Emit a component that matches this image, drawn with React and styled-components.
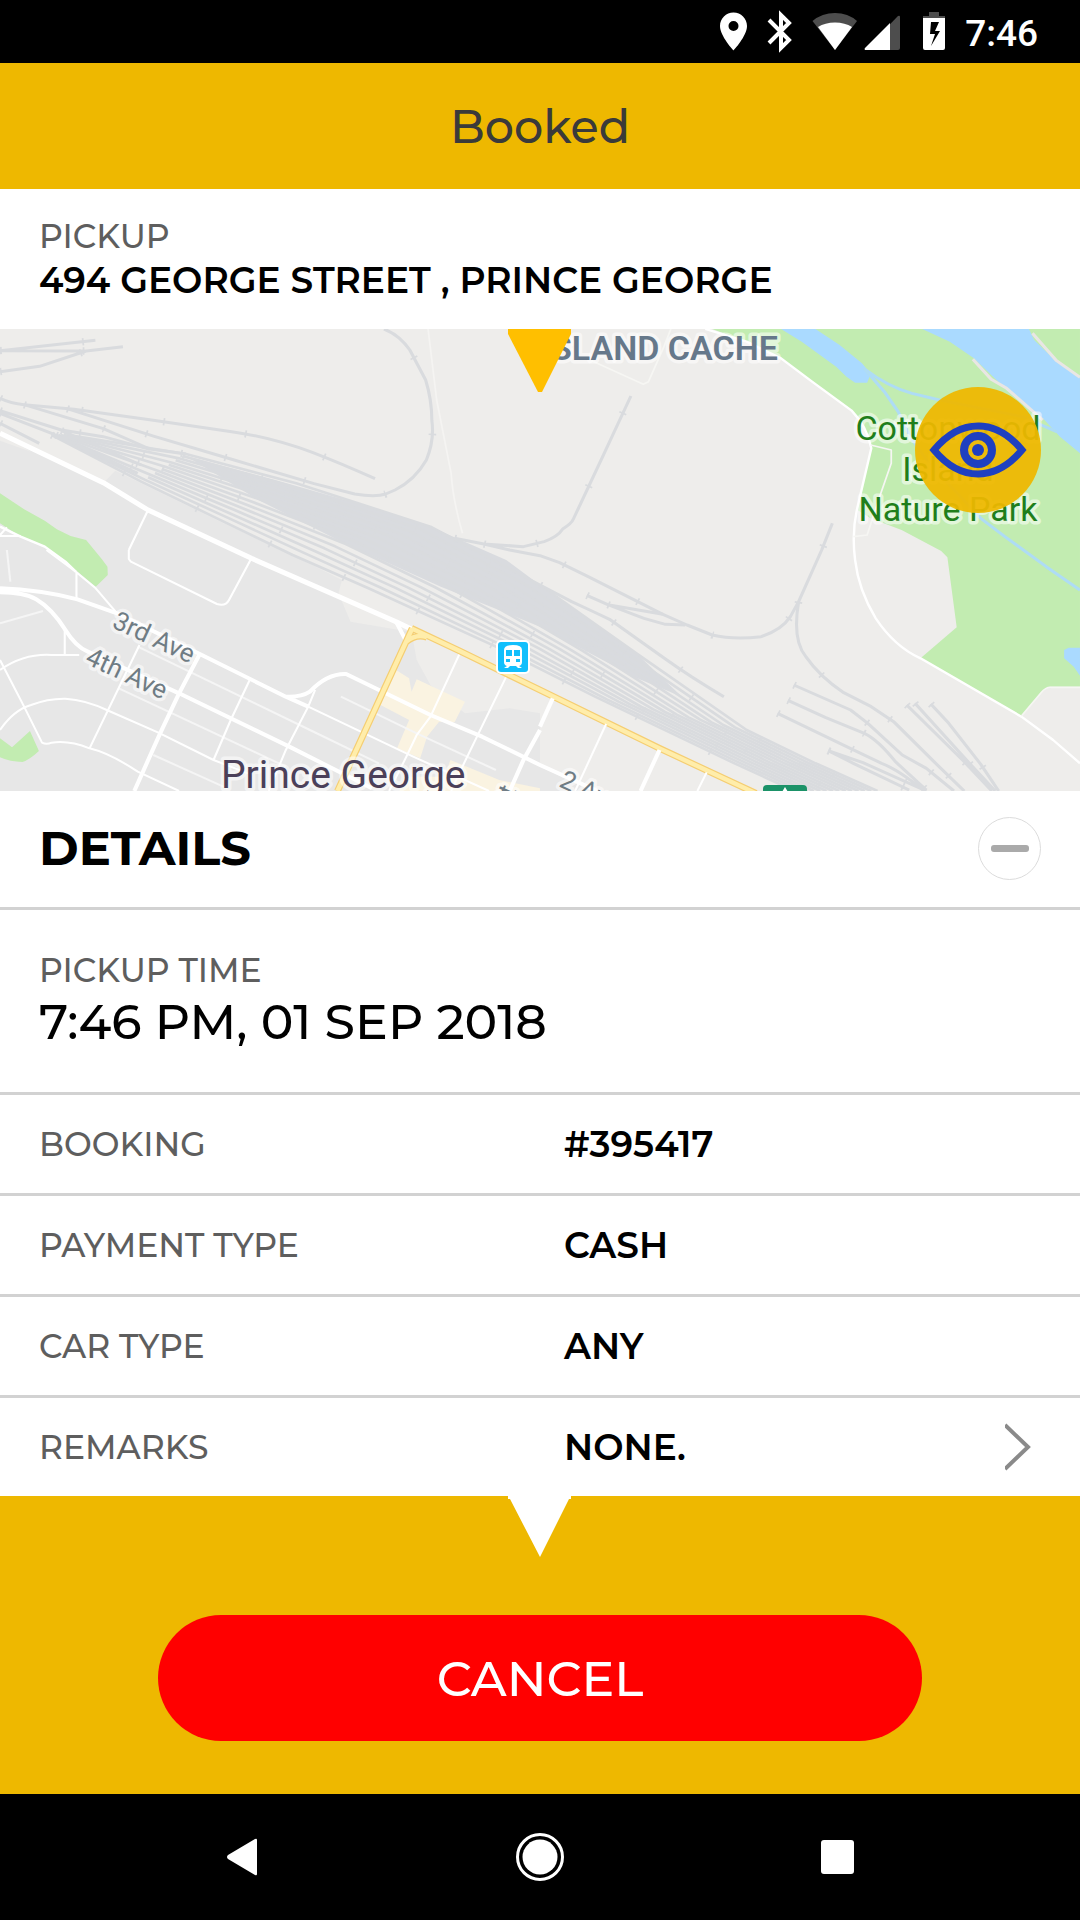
import React from "react";
import styled, { createGlobalStyle } from "styled-components";

const GlobalStyle = createGlobalStyle`
  *, *::before, *::after { box-sizing: border-box; }
  body { margin: 0; background: #000; }
  button { font: inherit; border: 0; padding: 0; background: none; cursor: pointer; }
`;

const Screen = styled.div`
  display: flex;
  flex-direction: column;
  min-height: 100vh;
  background: #fff;
  color: #000;
  font-family: Montserrat, Inter, "Open Sans", sans-serif;
  font-weight: 500;
`;

const StatusBar = styled.div`
  display: flex;
  justify-content: flex-end;
  gap: 5px;
  height: 63px;
  padding-right: 42px;
  background: #000;
  color: #fff;
`;

const Clock = styled.time`
  font: 500 37px/67px Roboto, sans-serif;
`;

const TitleBar = styled.header`
  display: flex;
  align-items: center;
  justify-content: center;
  height: 126px;
  background: #eeb800;
`;

const Title = styled.h1`
  margin: 0;
  font-size: 46px;
  font-weight: 500;
  color: #3a3a3a;
`;

const Block = styled.section`
  padding: ${(p) => (p.$roomy ? "38px 39px 40px" : "25px 39px 27px")};
  border-bottom: ${(p) => (p.$roomy ? "3px solid #d2d2d2" : "0")};
`;

const Label = styled.div`
  font-size: 33px;
  line-height: 44px;
  font-weight: 500;
  color: #5e5e5e;
`;

const Value = styled.div`
  font-size: ${(p) => (p.$large ? "49px" : "36px")};
  line-height: ${(p) => (p.$large ? "60px" : "44px")};
  font-weight: ${(p) => (p.$large ? 500 : 600)};
`;

const MapPanel = styled.div`
  position: relative;
  height: 462px;
  overflow: hidden;
`;

const MapDrawing = styled.svg`
  display: block;
  width: 100%;
  height: 100%;
  font-family: Roboto, sans-serif;
  font-weight: 400;
`;

const MapPointer = styled.svg`
  position: absolute;
  top: 0;
  left: 50%;
  margin-left: -32px;
`;

const EyeButton = styled.button`
  position: absolute;
  top: 58px;
  right: 39px;
  display: grid;
  place-items: center;
  width: 126px;
  height: 126px;
  border-radius: 50%;
  background: rgba(238, 184, 0, 0.94);
`;

const DetailsBar = styled.div`
  display: flex;
  align-items: center;
  justify-content: space-between;
  height: 119px;
  padding: 0 39px 2px;
  border-bottom: 3px solid #d2d2d2;
`;

const DetailsTitle = styled.h2`
  margin: 0;
  font-size: 48px;
  font-weight: 700;
`;

const CollapseButton = styled.button`
  display: grid;
  place-items: center;
  width: 63px;
  height: 63px;
  border: 1px solid #dcdcdc;
  border-radius: 50%;

  &::before {
    content: "";
    width: 38px;
    height: 7px;
    border-radius: 3px;
    background: #aaa;
  }
`;

const Rows = styled.dl`
  margin: 0;
`;

const Row = styled.div`
  display: grid;
  grid-template-columns: 1fr 1fr;
  column-gap: 48px;
  align-items: center;
  height: 101px;
  padding: 0 39px;
  border-bottom: 3px solid #d2d2d2;

  &:last-child { height: 98px; border-bottom: 0; }
`;

const RowValue = styled(Value)`
  display: flex;
  align-items: center;
  justify-content: space-between;
  margin: 0;
`;

const ChevronButton = styled.button`
  display: flex;
  height: 48px;
`;

const Footer = styled.footer`
  position: relative;
  flex: 1;
  padding: 119px 158px 53px;
  background: #eeb800;
`;

const CancelButton = styled.button`
  width: 100%;
  height: 126px;
  border-radius: 63px;
  background: #f00;
  color: #fff;
  font-size: 49px;
  font-weight: 500;
`;

const NavBar = styled.nav`
  display: grid;
  grid-template-columns: repeat(3, 298px);
  justify-content: center;
  height: 126px;
  background: #000;
`;

const NavButton = styled.button`
  display: grid;
  place-items: center;
`;

/* Upper and lower outline of the rail yard; tracks are interpolated between. */
const yardTop = [[200,345],[540,402],[860,490],[1250,620],[1568,795],[1848,1000],[2168,1230],[2368,1330],[2548,1413]];
const yardBottom = [[150,345],[410,485],[630,595],[850,705],[1070,805],[1440,980],[1728,1130],[2133,1330],[2308,1413]];
const TRACKS = 14;
const yardTracks = Array.from({ length: TRACKS }, (_, i) => {
  const t = i / (TRACKS - 1);
  return yardTop
    .map(([x, y], k) => {
      const [bx, by] = yardBottom[k];
      return `${(x + (bx - x) * t).toFixed(0)},${(y + (by - y) * t).toFixed(0)}`;
    })
    .slice(i % 2 === 0 || i === TRACKS - 1 ? 0 : 1)
    .join(" ");
});

const rails = [
  "M0 92L250 93L357 80M0 155L115 139L250 93M0 92L277 61",
  "M0 235Q30 250 70 254L215 268L435 299L673 335Q790 352 907 397Q990 430 1089 476",
  "M70 254L300 326L435 387L540 402M195 266L448 349L680 420L912 491L1030 522Q1090 532 1120 522L1147 510Q1205 480 1238 420Q1262 360 1254 302Q1254 240 1236 180L1190 90Q1160 45 1115 27",
  "M0 272L178 330L300 350L435 388M0 280L150 340L400 460M0 310L114 370M178 332L410 435",
  "M1320 655L1405 672L1520 680L1580 665Q1620 650 1634 627Q1660 610 1665 597L1750 410L1832 228M1405 672L1480 690L1568 707L1625 728L1708 770L1925 883L1995 915L2068 945Q2130 960 2210 950Q2270 930 2295 890L2319 845L2386 690L2417 610",
  "M2319 845Q2300 960 2340 1010Q2380 1070 2450 1118L2530 1160L2595 1205L2712 1325L2800 1413",
  "M1704 826L1765 854L1925 883M1765 854L1870 895L1932 913L1990 915",
  "M1568 795L1660 845L1725 876L1770 898L1925 1012Q2010 1075 2102 1130",
  "M2305 1095L2470 1170L2520 1210L2620 1305L2690 1345L2770 1413M2288 1141L2398 1193L2510 1240Q2550 1260 2600 1325L2690 1410M2258 1180L2475 1288L2560 1330Q2610 1350 2680 1410M2405 1292L2478 1330L2640 1410M2405 1292L2506 1328L2690 1413",
  "M2633 1155L2800 1325L2880 1413M2657 1150L2815 1330L2890 1413M2703 1152L2755 1210L2848 1333L2900 1413",
];

function TownMap() {
  return (
    <MapDrawing viewBox="0 0 1080 462" preserveAspectRatio="xMidYMid slice" role="img" aria-label="Map of Prince George">
      <rect width="1080" height="462" fill="#eeedeb" />
      <g transform="translate(0 -9) scale(.34438 .33333)" fill="none" strokeLinejoin="round">
        <path fill="#e7e7e7" d="M0 362L90 395L0 340L300 488L335 452L630 600L850 706L993 780L983 820L1018 905L1160 930L1195 935L1210 1020L1250 1095L1350 1180L1480 1165L1568 1180V1340L1720 1413H0Z" />
        <path fill="#c2ecb1" d="M0 520L70 568L130 602L165 628L205 648L250 660L296 718L312 740L313 765L278 800L222 752L130 680L60 650L0 610ZM0 1255L35 1282L87 1233L113 1293Q85 1320 65 1326Q30 1326 0 1312Z" />
        <path fill="#c2ecb1" d="M2068 27H3136V1100H3048Q3030 1105 3020 1122L2966 1188L2673 1015L2778 922L2751 712L2733 693L2618 630L2528 595L2490 570L2530 385L2503 310L2473 272L2358 185L2268 115L2168 65Z" />
        <g transform="translate(1568 0)">
          <path fill="#aadaff" d="M700 27H800L870 75L935 130Q957 155 957 170L950 188H915L890 170L860 140L760 65ZM1110 27L1190 65L1260 115L1320 175L1390 240L1465 300L1510 350L1568 400V172L1500 125L1435 60L1420 27Z" />
          <path fill="#aadaff" d="M1568 983H1535L1522 990V1015L1550 1040L1568 1067Z" />
          <path stroke="#e9e6e4" strokeWidth="9" d="M1257 118L1310 178L1355 205L1460 300M1430 40L1500 122L1568 172" />
          <path stroke="#aedcf5" strokeWidth="9" d="M940 145Q1010 200 1080 220L1160 240L1400 290L1500 335M945 150L1000 215L1040 275L1075 350L1130 430L1280 595L1350 650L1470 740L1568 810" />
          <path stroke="#fff" strokeWidth="7" d="M480 27L600 65L700 115L790 185L905 272Q950 320 962 385L920 570Q905 640 915 720Q925 810 975 895Q1030 980 1105 1015L1398 1190L1490 1260L1568 1330" />
          <path stroke="#f6f6f3" strokeWidth="5" d="M150 122L300 193L315 185L360 80L380 27M960 375L1020 390V430L988 525L950 645L910 650M1398 1188L1455 1118Q1470 1100 1485 1102H1568" />
        </g>
        <path stroke="#f5f4f2" strokeWidth="5" d="M1243 27L1268 240L1310 460Q1315 540 1343 640" />

        <g stroke="#d9dbde" strokeWidth="9">
          <path fill="#d9dbdf" stroke="none" d="M540 408L800 480L1120 575L1250 620L1470 720L1568 795L1848 1000L1980 1130L1850 1075L1568 920L1280 800L1000 670L750 540Z" />
          {yardTracks.map((points) => <polyline key={points} points={points} strokeWidth="8" />)}
          {yardTracks.filter((_, i) => i % 3 === 1).map((points) => (
            <polyline key={points} points={points} strokeWidth="22" strokeDasharray="5 232" />
          ))}
          {rails.map((d) => <path key={d} d={d} />)}
          {rails.map((d) => <path key={`tie ${d}`} d={d} strokeWidth="22" strokeDasharray="5 235" />)}
        </g>

        <g transform="translate(0 690)">
          <path fill="#faf3e1" d="M1150 360L1188 385L1195 425L1210 388L1350 455L1320 517L1275 515L1240 560L1220 625L1153 595L1188 510L1105 465L1120 430ZM1308 630L1450 690L1568 715V723H1160L1175 680H1290Z" />
          <g stroke="#f5f5f5" strokeWidth="6">
            <path d="M400 290L900 540L1100 640M345 415L830 650M445 615L660 715M990 440L1210 550L1440 660M0 220L125 183M20 0L30 95" />
          </g>
          <g stroke="#fff" strokeWidth="6">
            <path d="M374 0V27L380 35L630 162Q655 170 665 150L730 25M430 -120L374 0M135 0L220 65L278 115L340 190M222 65V145M0 -45L20 -68M0 -42H60M188 240V315M0 360Q70 310 150 315H230M0 330L70 470L122 578Q135 585 150 578Q200 570 260 595Q320 610 400 665L520 723M0 540Q40 480 90 465Q140 445 190 446Q250 450 310 480L460 548L620 630L720 670M405 285L260 595M725 390L670 510L620 630M915 420L895 470L830 600L780 723M1335 310L1250 500L1210 555L1180 620L1130 723M1470 380L1385 560L1345 645L1310 723M895 470L1200 620L1420 723" />
          </g>
          <path stroke="#fff" strokeWidth="7" d="M0 -70L60 -40L130 -10L190 35L220 65" />
          <g stroke="#fff" strokeWidth="12">
            <path strokeWidth="15" d="M0 -350L300 -202L430 -120L730 25L1150 215L1200 240" />
            <path d="M1150 215L1180 275M0 115Q120 120 225 148L340 190L580 312L830 440L895 470M0 127Q70 127 105 148Q150 175 190 240Q220 290 255 305L520 430L840 590L1080 715M830 440Q875 442 900 425Q950 370 1005 372L1250 495L1400 560L1568 645L1750 730M580 312L520 430L465 550L390 723M1568 540L1520 630L1480 723" />
          </g>
          <path stroke="#f5ce72" strokeWidth="20" d="M1197 235L1110 430L980 723M1180 275Q1210 250 1240 262M1195 235L1335 303L1568 420L1915 595L2195 730" />
          <path stroke="#ffedaa" strokeWidth="13" d="M1197 235L1110 430L980 723M1180 275Q1210 250 1240 262M1195 235L1335 303L1568 420L1915 595L2195 730" />
          <g stroke="#fff">
            <path strokeWidth="12" d="M1605 445L1568 530M1915 600L1860 723" />
            <path strokeWidth="6" d="M1760 522L1670 723M2052 667L2025 723" />
          </g>
        </g>
      </g>

      <g stroke="#fff" strokeOpacity=".55" strokeWidth="7" strokeLinejoin="round" paintOrder="stroke">
        <text x="778" y="31" textAnchor="end" fontSize="34" fontWeight="600" fill="#66788a">ISLAND CACHE</text>
        <g fontSize="34" fill="#1f7e1b" textAnchor="middle">
          <text x="948" y="111">Cottonwood</text>
          <text x="948" y="152">Island</text>
          <text x="948" y="192">Nature Park</text>
        </g>
        <g fontSize="26" fill="#6f7c84">
          <text transform="translate(111 298) rotate(25)">3rd Ave</text>
          <text transform="translate(84 334) rotate(25)">4th Ave</text>
          <text transform="translate(558 457) rotate(25)">2 Ave</text>
          <text transform="translate(507 483) rotate(-65)">St</text>
        </g>
        <text x="221" y="459" fontSize="39" fill="#4b4059">Prince George</text>
      </g>

      <rect x="496" y="311" width="34" height="34" rx="5" fill="#fff" />
      <rect x="498" y="313" width="30" height="30" rx="3" fill="#12bffc" />
      <path fill="#fff" d="M504 321q0-5 9-5t9 5v12q0 3-3 4l3 2h-4l-2-2h-6l-2 2h-4l3-2q-3-1-3-4Z" />
      <path fill="#12bffc" d="M506 321h6v6h-6ZM514 321h6v6h-6ZM506 330h4v3h-4ZM516 330h4v3h-4Z" />
      <rect x="763" y="456" width="44" height="20" rx="4" fill="#1b9268" />
      <path d="M785 458l3 5h-6Z" fill="#fff" />
    </MapDrawing>
  );
}

function StatusIcons() {
  return (
    <svg width="246" height="63" viewBox="714 0 246 63" fill="#fff" aria-hidden="true">
      <path fillRule="evenodd" d="M733.500 12.500c-7.500 0-13.500 6-13.500 13.500 0 10 13.500 24.500 13.500 24.500S747 36 747 26c0-7.500-6-13.500-13.500-13.500Zm0 8.500a5 5 0 1 1 0 10 5 5 0 0 1 0-10Z" />
      <path fill="none" stroke="#fff" strokeWidth="4" strokeLinejoin="miter" d="M769 20l20 20-8 8V15l8 8-20 20" />
      <path fill="#4d4d4d" d="M812.500 21Q822 13 835 13t22 8L835 50Z" />
      <path d="M818 27Q825 22.500 835 22.500T852 27L835 50Z" />
      <path fill="#4d4d4d" d="M865 50L898 16q2-1 2 1v31q0 2-2 2Z" />
      <path d="M865 50q-1-1 0-2L890 23V50Z" />
      <path fill="#4d4d4d" d="M929 12h10v4h6v4h-22v-4h6Z" />
      <path fillRule="evenodd" d="M923 18h22v30q0 2-2 2h-18q-2 0-2-2ZM931 22l-1 12h5l-4 12 9-15h-5l4-9Z" />
    </svg>
  );
}

const details = [
  { label: "BOOKING", value: "#395417" },
  { label: "PAYMENT TYPE", value: "CASH" },
  { label: "CAR TYPE", value: "ANY" },
  { label: "REMARKS", value: "NONE.", more: true },
];

export default function App() {
  return (
    <>
      <GlobalStyle />
      <Screen>
        <StatusBar>
          <StatusIcons />
          <Clock>7:46</Clock>
        </StatusBar>
        <TitleBar>
          <Title>Booked</Title>
        </TitleBar>
        <Block>
          <Label>PICKUP</Label>
          <Value>494 GEORGE STREET , PRINCE GEORGE</Value>
        </Block>
        <MapPanel>
          <TownMap />
          <MapPointer width="63" height="64" viewBox="0 0 63 64" aria-hidden="true">
            <path fill="#ffbf00" d="M0 0H63V5L34 63H30L0 5Z" />
          </MapPointer>
          <EyeButton aria-label="Show on map">
            <svg width="98" height="58" viewBox="0 0 98 58" fill="none" stroke="#1f40c0" strokeWidth="7">
              <path d="M5 29Q25 5 49 5T93 29Q73 53 49 53T5 29Z" />
              <circle cx="49" cy="29" r="14" strokeWidth="8" />
              <circle cx="49" cy="29" r="6" fill="#1f40c0" stroke="none" />
            </svg>
          </EyeButton>
        </MapPanel>
        <DetailsBar>
          <DetailsTitle>DETAILS</DetailsTitle>
          <CollapseButton aria-label="Collapse details" />
        </DetailsBar>
        <Block $roomy>
          <Label>PICKUP TIME</Label>
          <Value $large>7:46 PM, 01 SEP 2018</Value>
        </Block>
        <Rows>
          {details.map(({ label, value, more }) => (
            <Row key={label}>
              <Label as="dt">{label}</Label>
              <RowValue as="dd">
                {value}
                {more && (
                  <ChevronButton aria-label="Open remarks">
                    <svg width="36" height="48" viewBox="0 0 36 48" fill="none" stroke="#8a8a8a" strokeWidth="4">
                      <path d="M0 2L23 24L0 46" />
                    </svg>
                  </ChevronButton>
                )}
              </RowValue>
            </Row>
          ))}
        </Rows>
        <Footer>
          <MapPointer width="63" height="61" viewBox="0 0 63 61" aria-hidden="true">
            <path fill="#fff" d="M0 0H63V3H61L32 61L2 3H0Z" />
          </MapPointer>
          <CancelButton>CANCEL</CancelButton>
        </Footer>
        <NavBar>
          <NavButton aria-label="Back">
            <svg width="32" height="38" viewBox="0 0 32 38" fill="#fff">
              <path d="M29 1q2-1 2 1v34q0 2-2 1L2 21q-2-2 0-4Z" />
            </svg>
          </NavButton>
          <NavButton aria-label="Home">
            <svg width="50" height="50" viewBox="0 0 50 50">
              <circle cx="25" cy="25" r="22.500" fill="none" stroke="#fff" strokeWidth="3" />
              <circle cx="25" cy="25" r="17.500" fill="#fff" />
            </svg>
          </NavButton>
          <NavButton aria-label="Recent apps">
            <svg width="34" height="34" viewBox="0 0 34 34">
              <rect width="33" height="34" rx="3" fill="#fff" />
            </svg>
          </NavButton>
        </NavBar>
      </Screen>
    </>
  );
}
